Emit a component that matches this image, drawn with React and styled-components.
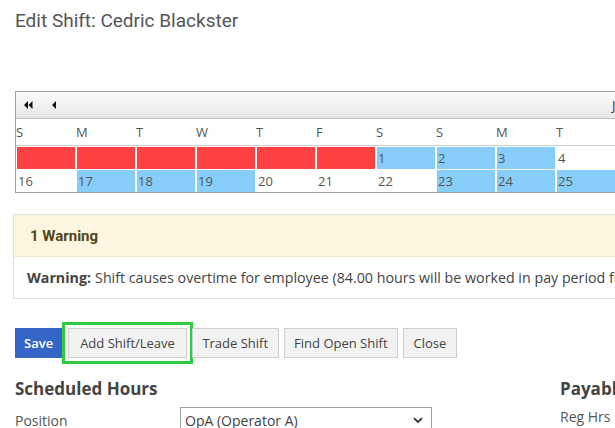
import styled, { createGlobalStyle } from "styled-components";

const GlobalStyle = createGlobalStyle`
  html, body {
    margin: 0;
    overflow: hidden;
    background: #fff;
  }
  body {
    font-family: "Open Sans", "Liberation Sans", sans-serif;
    color: #444;
  }
`;

const DAYS = ["S", "M", "T", "W", "T", "F", "S", "S", "M", "T", "W", "T", "F", "S"];

const WEEK_ONE = [
  { tone: "red" }, { tone: "red" }, { tone: "red" }, { tone: "red" }, { tone: "red" }, { tone: "red" },
  { label: "1", tone: "blue" }, { label: "2", tone: "blue" }, { label: "3", tone: "blue" },
  { label: "4" }, { label: "5" }, { label: "6" }, { label: "7" }, { label: "8" },
];

const WEEK_TWO = [
  { label: "16" }, { label: "17", tone: "blue" }, { label: "18", tone: "blue" }, { label: "19", tone: "blue" },
  { label: "20" }, { label: "21" }, { label: "22" },
  { label: "23", tone: "blue" }, { label: "24", tone: "blue" }, { label: "25", tone: "blue" },
  { label: "26" }, { label: "27" }, { label: "28" }, { label: "29" },
];

const TONES = { red: "#ff4141", blue: "#87cdf9" };

const FirstIcon = () => (
  <svg width="9" height="8" viewBox="0 0 9 8">
    <path d="M4 0 L0 4 L4 8 Z" fill="#111" />
    <path d="M8.5 0 L4.5 4 L8.5 8 Z" fill="#111" />
  </svg>
);

const PrevIcon = () => (
  <svg width="5" height="8" viewBox="0 0 5 8">
    <path d="M4 0 L0 4 L4 8 Z" fill="#111" />
  </svg>
);

const App = () => {
  return (
    <S.Page>
      <GlobalStyle />
      <S.Title>Edit Shift: Cedric Blackster</S.Title>

      <S.Calendar>
        <S.Toolbar>
          <S.NavButton><FirstIcon /></S.NavButton>
          <S.NavButton><PrevIcon /></S.NavButton>
          <S.MonthLabel>January 2022</S.MonthLabel>
        </S.Toolbar>
        <S.DayRow>
          {DAYS.map((d, i) => (
            <S.DayName key={i}>{d}</S.DayName>
          ))}
        </S.DayRow>
        <S.Weeks>
          {[...WEEK_ONE, ...WEEK_TWO].map((c, i) => (
            <S.Cell key={i} $tone={c.tone}>{c.label}</S.Cell>
          ))}
        </S.Weeks>
      </S.Calendar>

      <S.Warning>
        <S.WarningHead>1 Warning</S.WarningHead>
        <S.WarningBody>
          <b>Warning:</b> Shift causes overtime for employee (84.00 hours will be worked in pay period from 1/16/2022 to 1/29/2022)
        </S.WarningBody>
      </S.Warning>

      <S.Actions>
        <S.Button $primary>Save</S.Button>
        <S.Button $focused>Add Shift/Leave</S.Button>
        <S.Button>Trade Shift</S.Button>
        <S.Button>Find Open Shift</S.Button>
        <S.Button>Close</S.Button>
      </S.Actions>

      <S.Columns>
        <S.Column>
          <S.SectionTitle>Scheduled Hours</S.SectionTitle>
          <S.Field>
            <S.Label>Position</S.Label>
            <S.Select>
              <span>OpA (Operator A)</span>
              <svg width="10" height="7" viewBox="0 0 10 7">
                <path d="M1 1.2 L5 5 L9 1.2" fill="none" stroke="#333" strokeWidth="1.8" />
              </svg>
            </S.Select>
          </S.Field>
        </S.Column>
        <S.Column>
          <S.SectionTitle>Payable Hours</S.SectionTitle>
          <S.Field>
            <S.Label>Reg Hrs</S.Label>
          </S.Field>
        </S.Column>
      </S.Columns>
    </S.Page>
  );
};

const S = {};

S.Page = styled.div`
  width: 1100px;
  padding: 8px 0 0 15px;
`;

S.Title = styled.h1`
  margin: 0;
  font-family: Roboto, "Liberation Sans", sans-serif;
  font-weight: 400;
  font-size: 19px;
  line-height: 26px;
  color: #555;
`;

S.Calendar = styled.div`
  margin-top: 57px;
  border: 1px solid #a0a0a0;
  border-right: none;
`;

S.Toolbar = styled.div`
  display: flex;
  align-items: center;
  height: 26px;
  padding-left: 8px;
  background: linear-gradient(#fcfcfc, #e7e7e7);
  border-bottom: 1px solid #bdbdbd;
`;

S.NavButton = styled.span`
  display: flex;
  align-items: center;
  width: 28px;
  height: 26px;
`;

S.MonthLabel = styled.span`
  margin-left: 532px;
  font-size: 13px;
  color: #3a2a70;
`;

S.DayRow = styled.div`
  display: grid;
  grid-template-columns: repeat(14, 60px);
  height: 26px;
  border-bottom: 1px solid #cfcfcf;
`;

S.DayName = styled.div`
  font-size: 13px;
  line-height: 26px;
  color: #555;
`;

S.Weeks = styled.div`
  display: grid;
  grid-template-columns: repeat(14, 58px);
  grid-auto-rows: 22px;
  column-gap: 2px;
  row-gap: 1px;
  padding: 1px 0 0 1px;
`;

S.Cell = styled.div`
  padding-left: 1px;
  font-size: 13px;
  line-height: 22px;
  color: #555;
  background: ${(p) => (p.$tone ? TONES[p.$tone] : "transparent")};
`;

S.Warning = styled.div`
  margin: 21px 0 0 -2px;
  border: 1px solid #e0e0e0;
`;

S.WarningHead = styled.div`
  height: 41px;
  padding-left: 16px;
  display: flex;
  align-items: center;
  background: #fcf5e0;
  border-bottom: 1px solid #f3e9cf;
  font-family: Roboto, "Liberation Sans", sans-serif;
  font-weight: 700;
  font-size: 15px;
  color: #54461a;
`;

S.WarningBody = styled.div`
  height: 41px;
  padding-left: 13px;
  display: flex;
  align-items: center;
  font-size: 14.25px;
  color: #444;
  white-space: nowrap;

  b {
    font-weight: 700;
    margin-right: 4px;
  }
`;

S.Actions = styled.div`
  display: flex;
  gap: 5px;
  margin-top: 29px;
`;

S.Button = styled.button`
  height: 30px;
  padding: 0 ${(p) => (p.$primary ? "8px" : p.$focused ? "11px" : "9.5px")};
  margin-left: ${(p) => (p.$focused ? "1px" : "0")};
  font-family: "Open Sans", "Liberation Sans", sans-serif;
  font-size: 13px;
  font-weight: ${(p) => (p.$primary ? 600 : 400)};
  color: ${(p) => (p.$primary ? "#fff" : "#444")};
  background: ${(p) => (p.$primary ? "#3565c8" : "#f2f2f2")};
  border: 1px solid ${(p) => (p.$primary ? "#3565c8" : "#cfcfcf")};
  border-radius: 0;
  outline: ${(p) => (p.$focused ? "3px solid #2fcc42" : "none")};
  outline-offset: 3px;
`;

S.Columns = styled.div`
  display: grid;
  grid-template-columns: 545px 300px;
  margin-top: 19px;
`;

S.Column = styled.div``;

S.SectionTitle = styled.h2`
  margin: 0;
  font-size: 17px;
  font-weight: 700;
  line-height: 24px;
  color: #444;
`;

S.Field = styled.div`
  display: grid;
  grid-template-columns: 165px 252px;
  align-items: center;
  margin-top: 6px;
`;

S.Label = styled.div`
  font-size: 14px;
  color: #555;
`;

S.Select = styled.div`
  display: flex;
  align-items: center;
  justify-content: space-between;
  height: 24px;
  padding: 0 8px 0 4px;
  border: 1px solid #a3a3a3;
  font-size: 14px;
  color: #444;
`;

export default App;
